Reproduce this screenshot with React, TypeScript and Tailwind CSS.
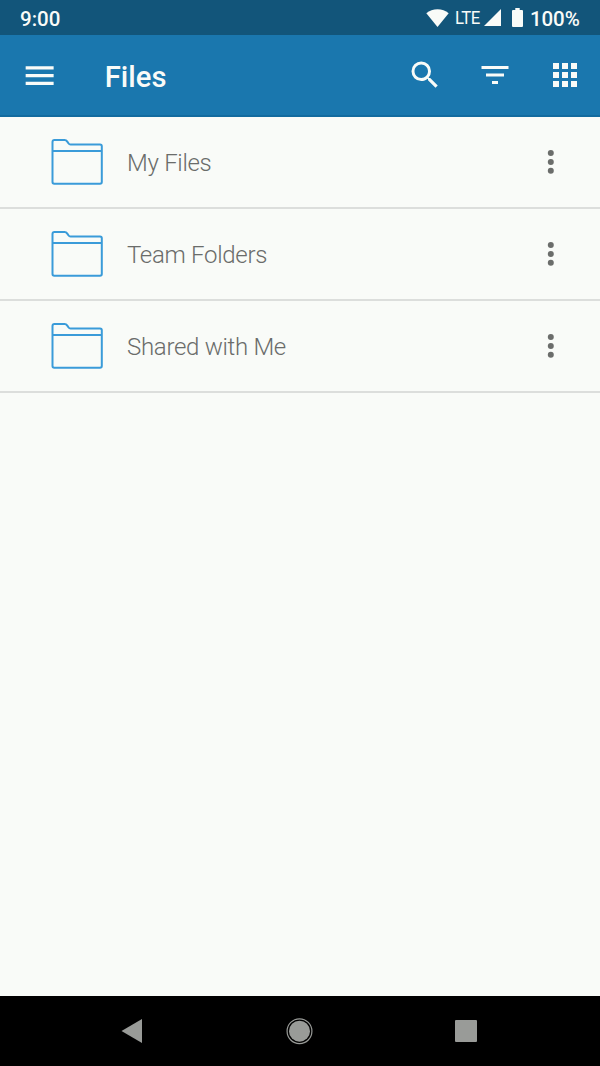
const folders = ["My Files", "Team Folders", "Shared with Me"];

function StatusBar() {
    return (
        <div className="flex h-[35px] items-center bg-[#12557a] pl-5 pr-5 font-medium text-[#f9fbf8]">
            <span className="flex-1 text-[20.5px] leading-none pt-[3px]">9:00</span>
            <svg className="mr-[6px] h-[18px] w-[23px]" viewBox="0 0 23 18" fill="currentColor">
                <path d="M0.3 4.2C3.4 1.6 7.3.2 11.5.2s8.100 1.400 11.200 4L11.500 17.900z" />
            </svg>
            <span className="w-[25px] origin-left scale-x-[0.93] whitespace-nowrap text-[18px] font-normal leading-none tracking-[-0.6px]">LTE</span>
            <svg className="ml-1 h-[17px] w-[17px]" viewBox="0 0 17 17" fill="currentColor">
                <path d="M17 0v17H0z" />
            </svg>
            <svg className="ml-[11px] h-[19px] w-[11px]" viewBox="0 0 11 19" fill="currentColor">
                <path d="M3.300 0h4.400v2H10a1 1 0 0 1 1 1v15a1 1 0 0 1-1 1H1a1 1 0 0 1-1-1V3a1 1 0 0 1 1-1h2.300z" />
            </svg>
            <span className="ml-[7px] w-[50px] whitespace-nowrap text-[20.5px] leading-none pt-[3px] tracking-[-0.1px]">100%</span>
        </div>
    );
}

function AppBar() {
    return (
        <header className="flex h-[82px] items-center border-b-2 border-[#136b9f] bg-[#1a77ae] pl-[21px] pr-[17px] text-[#f9fbf8]">
            <button className="flex pt-[2px]">
                <svg className="h-[37.300px] w-[37.300px]" viewBox="0 0 24 24" fill="currentColor">
                    <path d="M3 18h18v-2H3v2zm0-5h18v-2H3v2zm0-7v2h18V6H3z" />
                </svg>
            </button>
            <h1 className="ml-[46.500px] flex-1 pt-[5px] text-[29.200px] font-medium leading-none">Files</h1>
            <div className="flex gap-[34px]">
                <button className="flex">
                    <svg className="h-9 w-9" viewBox="0 0 24 24" fill="currentColor">
                        <path d="M15.500 14h-.79l-.28-.27A6.471 6.471 0 0 0 16 9.500 6.500 6.500 0 1 0 9.500 16c1.610 0 3.090-.59 4.230-1.570l.27.28v.79l5 4.990L20.490 19l-4.990-5zm-6 0C7.010 14 5 11.990 5 9.500S7.010 5 9.500 5 14 7.010 14 9.500 11.990 14 9.500 14z" />
                    </svg>
                </button>
                <button className="flex">
                    <svg className="h-9 w-9" viewBox="0 0 24 24" fill="currentColor">
                        <path d="M10 18h4v-2h-4v2zM3 6v2h18V6H3zm3 7h12v-2H6v2z" />
                    </svg>
                </button>
                <button className="flex">
                    <svg className="h-9 w-9" viewBox="0 0 24 24" fill="currentColor">
                        <path d="M4 8h4V4H4v4zm6 12h4v-4h-4v4zm-6 0h4v-4H4v4zm0-6h4v-4H4v4zm6 0h4v-4h-4v4zm6-10v4h4V4h-4zm-6 4h4V4h-4v4zm6 6h4v-4h-4v4zm0 6h4v-4h-4v4z" />
                    </svg>
                </button>
            </div>
        </header>
    );
}

function FolderRow({ name }: { name: string }) {
    return (
        <li className="flex h-[92px] items-center border-b-2 border-[#dcdedc] pl-[51px] pr-[46px]">
            <svg className="h-[47px] w-[52px]" viewBox="0 0 52 47" fill="none" stroke="#3a9bd9" strokeWidth="2" strokeLinejoin="round">
                <path d="M1.500 12V3Q1.500 1.100 3.400 1.100H13.500Q15.300 1.100 16.300 2.600L17.600 4.500Q18.300 5.500 19.500 5.500H49Q50.800 5.500 50.800 7.300V43Q50.800 44.800 49 44.800H3.300Q1.500 44.800 1.500 43V12H50.800" />
            </svg>
            <span className="ml-6 flex-1 pt-[2px] text-[24px] font-light leading-none tracking-[-0.3px] text-[#6a6c6a]">{name}</span>
            <button className="flex">
                <svg className="h-6 w-[7px]" viewBox="0 0 7 24" fill="#6b6d6b">
                    <circle cx="3.800" cy="3.100" r="3" />
                    <circle cx="3.800" cy="11.900" r="3" />
                    <circle cx="3.800" cy="20.700" r="3" />
                </svg>
            </button>
        </li>
    );
}

function NavBar() {
    return (
        <nav className="flex h-[70px] items-center justify-between bg-black pl-[121px] pr-[123px] text-[#999b98]">
            <svg className="h-[25px] w-[21px]" viewBox="0 0 21 25" fill="currentColor">
                <path d="M21 0v24L.5 12z" />
            </svg>
            <svg className="ml-[2px] h-[27px] w-[27px]" viewBox="0 0 27 27" fill="currentColor">
                <circle cx="13.500" cy="13.200" r="12.400" fill="none" stroke="currentColor" strokeWidth="1.200" />
                <circle cx="13.500" cy="13.200" r="10.500" />
            </svg>
            <div className="h-[22px] w-[22px] rounded-[1px] bg-[#999b98]" />
        </nav>
    );
}

export default function App() {
    return (
        <div className="flex h-[1066px] w-[600px] flex-col overflow-hidden bg-[#f9fbf8] font-['Roboto',sans-serif]">
            <StatusBar />
            <AppBar />
            <ul className="flex-1">
                {folders.map((name) => (
                    <FolderRow key={name} name={name} />
                ))}
            </ul>
            <NavBar />
        </div>
    );
}
